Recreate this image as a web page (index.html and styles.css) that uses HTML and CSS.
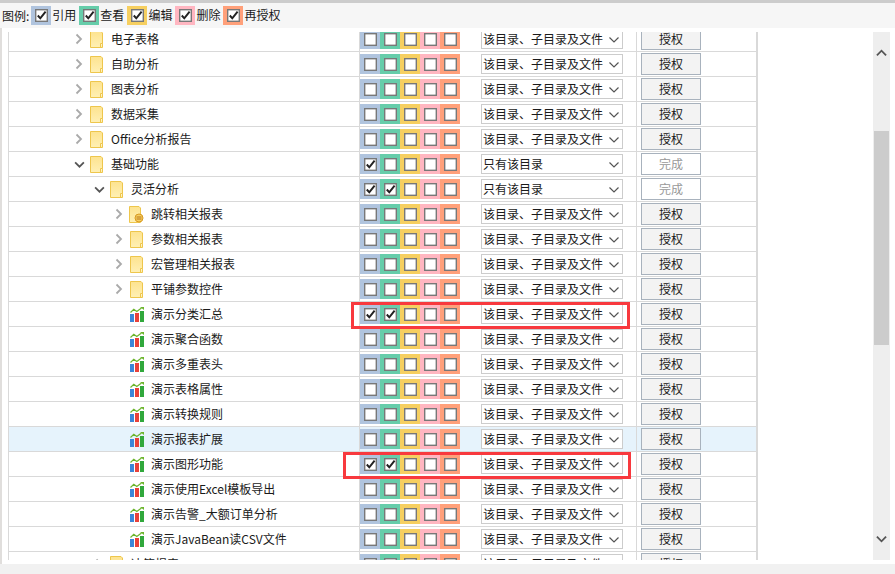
FILE: index.html
```html
<!DOCTYPE html>
<html lang="zh-CN">
<head>
<meta charset="utf-8">
<title>权限</title>
<link rel="stylesheet" href="styles.css">
</head>
<body>
<svg class="defs" width="0" height="0" aria-hidden="true">
  <defs><linearGradient id="fg" x1="0" y1="0" x2="0" y2="1"><stop offset="0" stop-color="#fde38f"/><stop offset="1" stop-color="#fff0b4"/></linearGradient></defs>
  <symbol id="folder" viewBox="0 0 13 17"><path d="M.5.500h10.500l1.500 1.500v14.500H.5z" fill="url(#fg)" stroke="#eec64c"/><path d="M10.500 16.500v-4h2" fill="#fff6cf" stroke="#eec64c"/></symbol>
  <symbol id="lockfolder" viewBox="0 0 15 17"><path d="M.5.500h9.500l1.500 1.500v14.500H.5z" fill="url(#fg)" stroke="#eec64c"/><circle cx="10" cy="12" r="4" fill="#f6cf62" stroke="#d99a22"/><path d="M7.500 11h5M7.500 13h5" stroke="#b9761a"/></symbol>
  <symbol id="chart" viewBox="0 0 14 15"><rect x="0" y="7" width="4" height="8" fill="#3b86d8"/><rect x="5" y="6" width="4" height="9" fill="#e8413a"/><rect x="10" y="4" width="4" height="11" fill="#31a83c"/><path d="M.5 5.500 3.800 2.300 6.800 4.500 11.500 1" fill="none" stroke="#6cb52d" stroke-width="1.200"/><path d="M10 0h4v3z" fill="#6cb52d"/></symbol>
  <symbol id="right" viewBox="0 0 8 12"><path d="M1.500 1.500 6 6l-4.500 4.500" fill="none" stroke="#aaa" stroke-width="1.800"/></symbol>
  <symbol id="down" viewBox="0 0 12 8"><path d="M1 1.500 6 6.500l5-5" fill="none" stroke="#555" stroke-width="2"/></symbol>
  <symbol id="caret" viewBox="0 0 10 6"><path d="M.5.500 5 5 9.500.5" fill="none" stroke="#555" stroke-width="1.200"/></symbol>
</svg>

<header class="legend">
  <span class="legend-label">图例:</span>
  <span class="legend-item"><i class="swatch c1"><i class="cb on"></i></i>引用</span>
  <span class="legend-item"><i class="swatch c2"><i class="cb on"></i></i>查看</span>
  <span class="legend-item"><i class="swatch c3"><i class="cb on"></i></i>编辑</span>
  <span class="legend-item"><i class="swatch c4"><i class="cb on"></i></i>删除</span>
  <span class="legend-item"><i class="swatch c5"><i class="cb on"></i></i>再授权</span>
</header>

<main class="viewport">
  <div class="table">
    <div class="row"><div class="name l0"><svg class="arrow"><use href="#right"/></svg><svg class="folder"><use href="#folder"/></svg><span>电子表格</span></div><div class="perms"><i class="swatch c1"><i class="cb"></i></i><i class="swatch c2"><i class="cb"></i></i><i class="swatch c3"><i class="cb"></i></i><i class="swatch c4"><i class="cb"></i></i><i class="swatch c5"><i class="cb"></i></i></div><div class="scope"><span class="select">该目录、子目录及文件<svg class="caret"><use href="#caret"/></svg></span></div><div class="act"><span class="btn">授权</span></div></div>
    <div class="row"><div class="name l0"><svg class="arrow"><use href="#right"/></svg><svg class="folder"><use href="#folder"/></svg><span>自助分析</span></div><div class="perms"><i class="swatch c1"><i class="cb"></i></i><i class="swatch c2"><i class="cb"></i></i><i class="swatch c3"><i class="cb"></i></i><i class="swatch c4"><i class="cb"></i></i><i class="swatch c5"><i class="cb"></i></i></div><div class="scope"><span class="select">该目录、子目录及文件<svg class="caret"><use href="#caret"/></svg></span></div><div class="act"><span class="btn">授权</span></div></div>
    <div class="row"><div class="name l0"><svg class="arrow"><use href="#right"/></svg><svg class="folder"><use href="#folder"/></svg><span>图表分析</span></div><div class="perms"><i class="swatch c1"><i class="cb"></i></i><i class="swatch c2"><i class="cb"></i></i><i class="swatch c3"><i class="cb"></i></i><i class="swatch c4"><i class="cb"></i></i><i class="swatch c5"><i class="cb"></i></i></div><div class="scope"><span class="select">该目录、子目录及文件<svg class="caret"><use href="#caret"/></svg></span></div><div class="act"><span class="btn">授权</span></div></div>
    <div class="row"><div class="name l0"><svg class="arrow"><use href="#right"/></svg><svg class="folder"><use href="#folder"/></svg><span>数据采集</span></div><div class="perms"><i class="swatch c1"><i class="cb"></i></i><i class="swatch c2"><i class="cb"></i></i><i class="swatch c3"><i class="cb"></i></i><i class="swatch c4"><i class="cb"></i></i><i class="swatch c5"><i class="cb"></i></i></div><div class="scope"><span class="select">该目录、子目录及文件<svg class="caret"><use href="#caret"/></svg></span></div><div class="act"><span class="btn">授权</span></div></div>
    <div class="row"><div class="name l0"><svg class="arrow"><use href="#right"/></svg><svg class="folder"><use href="#folder"/></svg><span>Office分析报告</span></div><div class="perms"><i class="swatch c1"><i class="cb"></i></i><i class="swatch c2"><i class="cb"></i></i><i class="swatch c3"><i class="cb"></i></i><i class="swatch c4"><i class="cb"></i></i><i class="swatch c5"><i class="cb"></i></i></div><div class="scope"><span class="select">该目录、子目录及文件<svg class="caret"><use href="#caret"/></svg></span></div><div class="act"><span class="btn">授权</span></div></div>
    <div class="row"><div class="name l0"><svg class="arrow open"><use href="#down"/></svg><svg class="folder"><use href="#folder"/></svg><span>基础功能</span></div><div class="perms"><i class="swatch c1"><i class="cb on"></i></i><i class="swatch c2"><i class="cb"></i></i><i class="swatch c3"><i class="cb"></i></i><i class="swatch c4"><i class="cb"></i></i><i class="swatch c5"><i class="cb"></i></i></div><div class="scope"><span class="select">只有该目录<svg class="caret"><use href="#caret"/></svg></span></div><div class="act"><span class="btn done">完成</span></div></div>
    <div class="row"><div class="name l1"><svg class="arrow open"><use href="#down"/></svg><svg class="folder"><use href="#folder"/></svg><span>灵活分析</span></div><div class="perms"><i class="swatch c1"><i class="cb on"></i></i><i class="swatch c2"><i class="cb on"></i></i><i class="swatch c3"><i class="cb"></i></i><i class="swatch c4"><i class="cb"></i></i><i class="swatch c5"><i class="cb"></i></i></div><div class="scope"><span class="select">只有该目录<svg class="caret"><use href="#caret"/></svg></span></div><div class="act"><span class="btn done">完成</span></div></div>
    <div class="row"><div class="name l2"><svg class="arrow"><use href="#right"/></svg><svg class="folder"><use href="#lockfolder"/></svg><span>跳转相关报表</span></div><div class="perms"><i class="swatch c1"><i class="cb"></i></i><i class="swatch c2"><i class="cb"></i></i><i class="swatch c3"><i class="cb"></i></i><i class="swatch c4"><i class="cb"></i></i><i class="swatch c5"><i class="cb"></i></i></div><div class="scope"><span class="select">该目录、子目录及文件<svg class="caret"><use href="#caret"/></svg></span></div><div class="act"><span class="btn">授权</span></div></div>
    <div class="row"><div class="name l2"><svg class="arrow"><use href="#right"/></svg><svg class="folder"><use href="#folder"/></svg><span>参数相关报表</span></div><div class="perms"><i class="swatch c1"><i class="cb"></i></i><i class="swatch c2"><i class="cb"></i></i><i class="swatch c3"><i class="cb"></i></i><i class="swatch c4"><i class="cb"></i></i><i class="swatch c5"><i class="cb"></i></i></div><div class="scope"><span class="select">该目录、子目录及文件<svg class="caret"><use href="#caret"/></svg></span></div><div class="act"><span class="btn">授权</span></div></div>
    <div class="row"><div class="name l2"><svg class="arrow"><use href="#right"/></svg><svg class="folder"><use href="#folder"/></svg><span>宏管理相关报表</span></div><div class="perms"><i class="swatch c1"><i class="cb"></i></i><i class="swatch c2"><i class="cb"></i></i><i class="swatch c3"><i class="cb"></i></i><i class="swatch c4"><i class="cb"></i></i><i class="swatch c5"><i class="cb"></i></i></div><div class="scope"><span class="select">该目录、子目录及文件<svg class="caret"><use href="#caret"/></svg></span></div><div class="act"><span class="btn">授权</span></div></div>
    <div class="row"><div class="name l2"><svg class="arrow"><use href="#right"/></svg><svg class="folder"><use href="#folder"/></svg><span>平铺参数控件</span></div><div class="perms"><i class="swatch c1"><i class="cb"></i></i><i class="swatch c2"><i class="cb"></i></i><i class="swatch c3"><i class="cb"></i></i><i class="swatch c4"><i class="cb"></i></i><i class="swatch c5"><i class="cb"></i></i></div><div class="scope"><span class="select">该目录、子目录及文件<svg class="caret"><use href="#caret"/></svg></span></div><div class="act"><span class="btn">授权</span></div></div>
    <div class="row"><div class="name l3"><svg class="chart"><use href="#chart"/></svg><span>演示分类汇总</span></div><div class="perms"><i class="swatch c1"><i class="cb on"></i></i><i class="swatch c2"><i class="cb on"></i></i><i class="swatch c3"><i class="cb"></i></i><i class="swatch c4"><i class="cb"></i></i><i class="swatch c5"><i class="cb"></i></i></div><div class="scope"><span class="select">该目录、子目录及文件<svg class="caret"><use href="#caret"/></svg></span></div><div class="act"><span class="btn">授权</span></div></div>
    <div class="row"><div class="name l3"><svg class="chart"><use href="#chart"/></svg><span>演示聚合函数</span></div><div class="perms"><i class="swatch c1"><i class="cb"></i></i><i class="swatch c2"><i class="cb"></i></i><i class="swatch c3"><i class="cb"></i></i><i class="swatch c4"><i class="cb"></i></i><i class="swatch c5"><i class="cb"></i></i></div><div class="scope"><span class="select">该目录、子目录及文件<svg class="caret"><use href="#caret"/></svg></span></div><div class="act"><span class="btn">授权</span></div></div>
    <div class="row"><div class="name l3"><svg class="chart"><use href="#chart"/></svg><span>演示多重表头</span></div><div class="perms"><i class="swatch c1"><i class="cb"></i></i><i class="swatch c2"><i class="cb"></i></i><i class="swatch c3"><i class="cb"></i></i><i class="swatch c4"><i class="cb"></i></i><i class="swatch c5"><i class="cb"></i></i></div><div class="scope"><span class="select">该目录、子目录及文件<svg class="caret"><use href="#caret"/></svg></span></div><div class="act"><span class="btn">授权</span></div></div>
    <div class="row"><div class="name l3"><svg class="chart"><use href="#chart"/></svg><span>演示表格属性</span></div><div class="perms"><i class="swatch c1"><i class="cb"></i></i><i class="swatch c2"><i class="cb"></i></i><i class="swatch c3"><i class="cb"></i></i><i class="swatch c4"><i class="cb"></i></i><i class="swatch c5"><i class="cb"></i></i></div><div class="scope"><span class="select">该目录、子目录及文件<svg class="caret"><use href="#caret"/></svg></span></div><div class="act"><span class="btn">授权</span></div></div>
    <div class="row"><div class="name l3"><svg class="chart"><use href="#chart"/></svg><span>演示转换规则</span></div><div class="perms"><i class="swatch c1"><i class="cb"></i></i><i class="swatch c2"><i class="cb"></i></i><i class="swatch c3"><i class="cb"></i></i><i class="swatch c4"><i class="cb"></i></i><i class="swatch c5"><i class="cb"></i></i></div><div class="scope"><span class="select">该目录、子目录及文件<svg class="caret"><use href="#caret"/></svg></span></div><div class="act"><span class="btn">授权</span></div></div>
    <div class="row hover"><div class="name l3"><svg class="chart"><use href="#chart"/></svg><span>演示报表扩展</span></div><div class="perms"><i class="swatch c1"><i class="cb"></i></i><i class="swatch c2"><i class="cb"></i></i><i class="swatch c3"><i class="cb"></i></i><i class="swatch c4"><i class="cb"></i></i><i class="swatch c5"><i class="cb"></i></i></div><div class="scope"><span class="select">该目录、子目录及文件<svg class="caret"><use href="#caret"/></svg></span></div><div class="act"><span class="btn">授权</span></div></div>
    <div class="row"><div class="name l3"><svg class="chart"><use href="#chart"/></svg><span>演示图形功能</span></div><div class="perms"><i class="swatch c1"><i class="cb on"></i></i><i class="swatch c2"><i class="cb on"></i></i><i class="swatch c3"><i class="cb"></i></i><i class="swatch c4"><i class="cb"></i></i><i class="swatch c5"><i class="cb"></i></i></div><div class="scope"><span class="select">该目录、子目录及文件<svg class="caret"><use href="#caret"/></svg></span></div><div class="act"><span class="btn">授权</span></div></div>
    <div class="row"><div class="name l3"><svg class="chart"><use href="#chart"/></svg><span>演示使用Excel模板导出</span></div><div class="perms"><i class="swatch c1"><i class="cb"></i></i><i class="swatch c2"><i class="cb"></i></i><i class="swatch c3"><i class="cb"></i></i><i class="swatch c4"><i class="cb"></i></i><i class="swatch c5"><i class="cb"></i></i></div><div class="scope"><span class="select">该目录、子目录及文件<svg class="caret"><use href="#caret"/></svg></span></div><div class="act"><span class="btn">授权</span></div></div>
    <div class="row"><div class="name l3"><svg class="chart"><use href="#chart"/></svg><span>演示告警_大额订单分析</span></div><div class="perms"><i class="swatch c1"><i class="cb"></i></i><i class="swatch c2"><i class="cb"></i></i><i class="swatch c3"><i class="cb"></i></i><i class="swatch c4"><i class="cb"></i></i><i class="swatch c5"><i class="cb"></i></i></div><div class="scope"><span class="select">该目录、子目录及文件<svg class="caret"><use href="#caret"/></svg></span></div><div class="act"><span class="btn">授权</span></div></div>
    <div class="row"><div class="name l3"><svg class="chart"><use href="#chart"/></svg><span>演示JavaBean读CSV文件</span></div><div class="perms"><i class="swatch c1"><i class="cb"></i></i><i class="swatch c2"><i class="cb"></i></i><i class="swatch c3"><i class="cb"></i></i><i class="swatch c4"><i class="cb"></i></i><i class="swatch c5"><i class="cb"></i></i></div><div class="scope"><span class="select">该目录、子目录及文件<svg class="caret"><use href="#caret"/></svg></span></div><div class="act"><span class="btn">授权</span></div></div>
    <div class="row"><div class="name l1"><svg class="arrow"><use href="#right"/></svg><svg class="folder"><use href="#folder"/></svg><span>决策报表</span></div><div class="perms"><i class="swatch c1"><i class="cb"></i></i><i class="swatch c2"><i class="cb"></i></i><i class="swatch c3"><i class="cb"></i></i><i class="swatch c4"><i class="cb"></i></i><i class="swatch c5"><i class="cb"></i></i></div><div class="scope"><span class="select">该目录、子目录及文件<svg class="caret"><use href="#caret"/></svg></span></div><div class="act"><span class="btn">授权</span></div></div>
  </div>
  <aside class="scrollbar">
    <svg class="sb-arrow up"><use href="#down"/></svg>
    <div class="sb-track"><div class="sb-thumb"></div></div>
    <svg class="sb-arrow"><use href="#down"/></svg>
  </aside>
  <div class="mark m1"></div>
  <div class="mark m2"></div>
</main>
<footer class="foot"></footer>
</body>
</html>
```
FILE: styles.css
```css
* { box-sizing: border-box; }
html, body { margin: 0; height: 100%; overflow: hidden; }
body {
  width: 895px; height: 574px;
  background: #fff;
  font: 12px/16px "Noto Sans CJK SC", "Liberation Sans", sans-serif;
  color: #1a1a1a;
  display: flex; flex-direction: column;
  position: relative;
}
body::before { content: ""; position: absolute; left: 0; top: 28px; bottom: 10px; width: 2px; background: #e0dedc; }
.defs { position: absolute; }
.legend {
  height: 28px; flex: none;
  border-top: 3px solid #ccc;
  background: #f6f6f6;
  display: flex; align-items: flex-end;
  padding: 0 0 3px 2px;
}
.legend-label { margin-right: 2px; line-height: 19px; }
.legend-item { display: flex; align-items: center; gap: 1px; margin-right: 3px; line-height: 20px; }
.legend .swatch { height: 19px; }
.swatch { display: flex; align-items: center; justify-content: center; width: 20px; height: 20px; flex: none; }
.c1 { background: #b0c4de; }
.c2 { background: #66cdaa; }
.c3 { background: #f6cf60; }
.c4 { background: #ffb6c1; }
.c5 { background: #ffa07a; }
.cb {
  display: block; width: 13px; height: 13px;
  background: url("data:image/svg+xml,%3Csvg xmlns='http://www.w3.org/2000/svg' viewBox='0 0 13 13'%3E%3Crect x='.7' y='.7' width='11.6' height='11.600' fill='%23fff' stroke='%23787878' stroke-width='1.400'/%3E%3C/svg%3E") center / 13px 13px no-repeat;
}
.cb.on {
  background-image: url("data:image/svg+xml,%3Csvg xmlns='http://www.w3.org/2000/svg' viewBox='0 0 13 13'%3E%3Crect x='.7' y='.7' width='11.6' height='11.600' fill='%23fff' stroke='%23787878' stroke-width='1.400'/%3E%3Cpath d='M2.800 6.500 5.300 9.300 10.600 2.600' fill='none' stroke='%23222' stroke-width='2'/%3E%3C/svg%3E");
}
.viewport {
  height: 528px; flex: none; margin-top: 4px;
  position: relative; overflow: hidden;
  display: flex; padding-left: 8px;
}
.table {
  width: 750px; flex: none;
  margin-top: -5px;
  border-left: 1px solid #d9d9d9; border-right: 2px solid #d9d9d9;
}
.row {
  display: grid; grid-template-columns: 351px 120px 157px 119px;
  height: 25px;
  border-bottom: 1px solid #d9d9d9;
}
.row.hover { background: #e6f3fc; }
.name { display: flex; align-items: center; white-space: nowrap; border-right: 1px solid #d9d9d9; }
.l0 { padding-left: 66px; }
.l1 { padding-left: 86px; }
.l2 { padding-left: 106px; }
.l3 { padding-left: 121px; }
.arrow { width: 8px; height: 12px; flex: none; margin-right: 6px; }
.arrow.open { width: 11px; height: 7px; margin: 0 4px 0 -1px; }
.folder { width: 15px; height: 17px; flex: none; margin-right: 7px; }
.chart { width: 14px; height: 15px; flex: none; margin-right: 7px; }
.perms { display: flex; align-items: center; }
.scope { display: flex; align-items: center; padding-left: 1px; border-right: 1px solid #d9d9d9; }
.select {
  width: 142px; height: 20px;
  border: 1px solid #ccc; background: #fff;
  display: flex; align-items: center;
  padding-left: 1px; white-space: nowrap;
  position: relative;
}
.caret { position: absolute; right: 3px; top: 7px; width: 10px; height: 6px; }
.act { display: flex; align-items: center; padding-left: 4px; }
.btn {
  width: 60px; height: 22px;
  border: 1px solid #a8b2bd; background: #f3f3f3;
  display: flex; align-items: center; justify-content: center;
}
.btn.done { background: #fff; color: #999; }
.scrollbar {
  position: absolute; left: 873px; top: 0; bottom: 0; width: 17px;
  background: #eee;
  display: flex; flex-direction: column; align-items: center;
}
.sb-track { flex: 1; width: 100%; position: relative; }
.sb-thumb { position: absolute; left: 1px; right: 1px; top: 57px; height: 214px; background: #ccc; }
.sb-arrow { width: 11px; height: 8px; flex: none; margin: 17px 0; }
.sb-arrow.up { transform: rotate(180deg); }
.mark { position: absolute; border: 3px solid #f8393e; pointer-events: none; }
.m1 { left: 351px; top: 270px; width: 279px; height: 27px; }
.m2 { left: 343px; top: 420px; width: 288px; height: 27px; }
.foot { flex: 1; margin-top: 4px; background: #f1f1f1; }
```
